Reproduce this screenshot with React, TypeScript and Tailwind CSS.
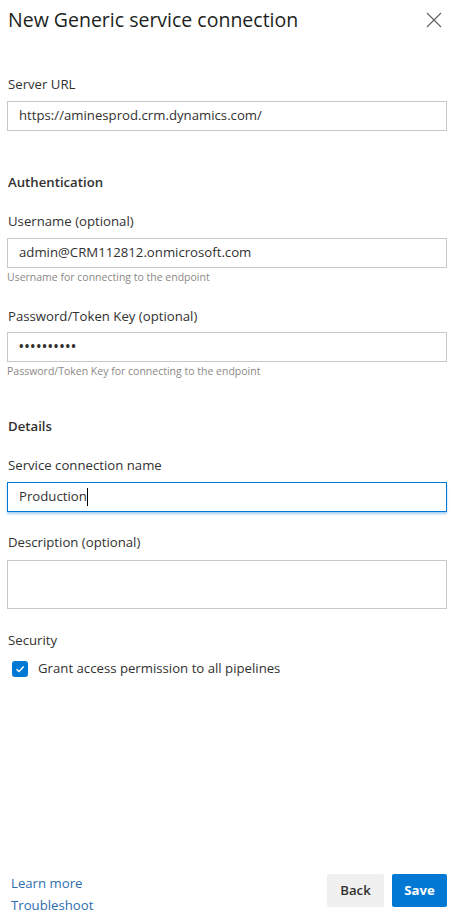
import React from "react";

const font = { fontFamily: '"Open Sans", "Noto Sans", Arial, sans-serif' };

function Label({ children, className = "" }: { children: React.ReactNode; className?: string }) {
  return <div className={`h-5 text-[13.2px] leading-5 text-[#323130] ${className}`}>{children}</div>;
}

function Field({ children, focused = false }: { children?: React.ReactNode; focused?: boolean }) {
  return (
    <div
      className={`h-[30px] flex items-center px-[11px] border text-[13.2px] text-[#323130] ${
        focused
          ? "border-[#0078d4] shadow-[0_2px_2px_rgba(0,120,212,0.35)]"
          : "border-[#c8c8c8]"
      }`}
    >
      {children}
    </div>
  );
}

function Helper({ children }: { children: React.ReactNode }) {
  return <div className="mt-[2px] h-[14px] text-[10.5px] leading-[14px] text-[#8a8886]">{children}</div>;
}

export default function App() {
  return (
    <div className="h-[919px] w-[458px] bg-white flex flex-col" style={font}>
      <div className="flex items-center justify-between pl-2 pr-4 pt-[6px] h-[34px]">
        <h1 className="text-[19.5px] leading-7 font-medium text-[#201f1e]">
          New Generic service connection
        </h1>
        <svg width="16" height="16" viewBox="0 0 16 16" className="text-[#605e5c]">
          <path d="M1 1 L15 15 M15 1 L1 15" stroke="currentColor" strokeWidth="1.1" fill="none" />
        </svg>
      </div>

      <div className="flex-1 px-[7px] pr-[11px]">
        <Label className="mt-[40px] mb-[7px] pl-px">Server URL</Label>
        <Field>https://aminesprod.crm.dynamics.com/</Field>

        <Label className="mt-[41px] pl-px font-semibold text-[12.5px]">Authentication</Label>

        <Label className="mt-[19px] mb-[7px] pl-px">Username (optional)</Label>
        <Field>admin@CRM112812.onmicrosoft.com</Field>
        <Helper>Username for connecting to the endpoint</Helper>

        <Label className="mt-[22px] mb-[6px] pl-px">Password/Token Key (optional)</Label>
        <Field>
          <span className="text-[12px] tracking-[1.3px] font-bold">••••••••••</span>
        </Field>
        <Helper>Password/Token Key for connecting to the endpoint</Helper>

        <Label className="mt-[38px] pl-px font-semibold text-[12.5px]">Details</Label>

        <Label className="mt-[19px] mb-[7px] pl-px">Service connection name</Label>
        <Field focused>
          Production
          <span className="inline-block w-px h-[18px] bg-black" />
        </Field>

        <Label className="mt-[20px] mb-[8px] pl-px">Description (optional)</Label>
        <div className="h-[49px] border border-[#c8c8c8]" />

        <Label className="mt-[21px] pl-px">Security</Label>
        <div className="mt-[9px] flex items-center h-5 pl-[5px]">
          <div className="w-4 h-4 rounded-[3px] bg-[#0078d4] flex items-center justify-center">
            <svg width="10" height="10" viewBox="0 0 10 10">
              <path d="M1.5 5.2 L4 7.5 L8.7 2.5" stroke="white" strokeWidth="1.4" fill="none" />
            </svg>
          </div>
          <span className="ml-[10px] text-[13.2px] text-[#323130]">Grant access permission to all pipelines</span>
        </div>
      </div>

      <div className="flex items-center justify-between pl-[11px] pr-[11px] pb-[3px]">
        <div className="flex flex-col text-[13.2px] leading-[22px] text-[#2e6eb0]">
          <span>Learn more</span>
          <span>Troubleshoot</span>
        </div>
        <div className="flex gap-2 items-center mb-[7px]">
          <button className="h-[33px] w-[57px] rounded-[2px] bg-[#f0f0f0] text-[13.2px] font-semibold text-[#323130]">
            Back
          </button>
          <button className="h-[33px] w-[55px] rounded-[2px] bg-[#0078d4] text-[13.2px] font-bold text-white">
            Save
          </button>
        </div>
      </div>
    </div>
  );
}
